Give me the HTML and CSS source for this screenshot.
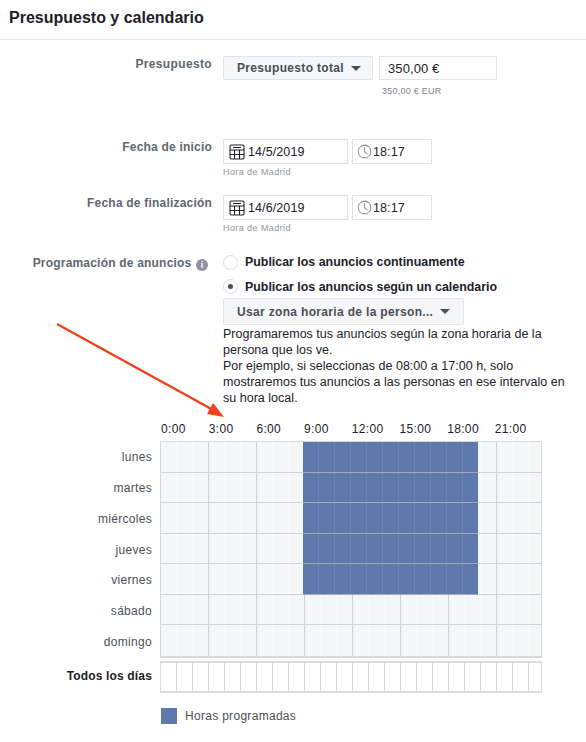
FILE: index.html
```html
<!DOCTYPE html>
<html lang="es">
<head>
<meta charset="utf-8">
<title>Presupuesto y calendario</title>
<link rel="stylesheet" href="styles.css">
</head>
<body>
<div class="page">
  <header class="head"><h1>Presupuesto y calendario</h1></header>

  <section class="row budget">
    <div class="label">Presupuesto</div>
    <div class="ctrl">
      <div class="inline">
        <div class="select sel-budget">Presupuesto total <span class="caret"></span></div>
        <div class="input in-budget">350,00 €</div>
      </div>
      <div class="eur">350,00 € EUR</div>
    </div>
  </section>

  <section class="row start">
    <div class="label">Fecha de inicio</div>
    <div class="ctrl">
      <div class="inline dates">
        <div class="input date">
          <svg class="ico" viewBox="0 0 16 16"><path d="M2.5 1h11A1.5 1.5 0 0 1 15 2.500V13.500A1.500 1.500 0 0 1 13.500 15H2.500A1.500 1.500 0 0 1 1 13.500V2.500A1.500 1.500 0 0 1 2.500 1ZM1 6H15M1 10.500H15M5.500 6V15M10.500 6V15M4 3.500H12" fill="none" stroke="#1d2129" stroke-width="1.100"/></svg>
          14/5/2019
        </div>
        <div class="input time">
          <svg class="ico clock" viewBox="0 0 16 16"><circle cx="8" cy="8" r="6.800" fill="none" stroke="#90949c" stroke-width="1.100"/><path d="M8 3.500V8L11 11" fill="none" stroke="#90949c" stroke-width="1.100"/></svg>
          18:17
        </div>
      </div>
      <div class="tz">Hora de Madrid</div>
    </div>
  </section>

  <section class="row end">
    <div class="label">Fecha de finalización</div>
    <div class="ctrl">
      <div class="inline dates">
        <div class="input date">
          <svg class="ico" viewBox="0 0 16 16"><path d="M2.5 1h11A1.5 1.5 0 0 1 15 2.500V13.500A1.500 1.500 0 0 1 13.500 15H2.500A1.500 1.500 0 0 1 1 13.500V2.500A1.500 1.500 0 0 1 2.500 1ZM1 6H15M1 10.500H15M5.500 6V15M10.500 6V15M4 3.500H12" fill="none" stroke="#1d2129" stroke-width="1.100"/></svg>
          14/6/2019
        </div>
        <div class="input time">
          <svg class="ico clock" viewBox="0 0 16 16"><circle cx="8" cy="8" r="6.800" fill="none" stroke="#90949c" stroke-width="1.100"/><path d="M8 3.500V8L11 11" fill="none" stroke="#90949c" stroke-width="1.100"/></svg>
          18:17
        </div>
      </div>
      <div class="tz">Hora de Madrid</div>
    </div>
  </section>

  <section class="row sched">
    <div class="label sched-label">Programación de anuncios <span class="info">i</span></div>
    <div class="ctrl">
      <div class="radio-row"><span class="radio"></span>Publicar los anuncios continuamente</div>
      <div class="radio-row second"><span class="radio on"></span>Publicar los anuncios según un calendario</div>
      <div class="select sel-zone"><span>Usar zona horaria de la person...</span><span class="caret"></span></div>
      <p class="note">Programaremos tus anuncios según la zona horaria de la persona que los ve.<br>Por ejemplo, si seleccionas de 08:00 a 17:00 h, solo mostraremos tus anuncios a las personas en ese intervalo en su hora local.</p>
    </div>
  </section>

  <section class="calendar">
    <div class="hours">
      <span>0:00</span><span>3:00</span><span>6:00</span><span>9:00</span><span>12:00</span><span>15:00</span><span>18:00</span><span>21:00</span>
    </div>
    <div class="cal-body">
      <div class="days">
        <div>lunes</div><div>martes</div><div>miércoles</div><div>jueves</div><div>viernes</div><div>sábado</div><div>domingo</div>
      </div>
      <div class="grid">
        <div class="day"><div class="sel"></div></div>
        <div class="day"><div class="sel"></div></div>
        <div class="day"><div class="sel"></div></div>
        <div class="day"><div class="sel"></div></div>
        <div class="day"><div class="sel"></div></div>
        <div class="day"></div>
        <div class="day"></div>
      </div>
    </div>
    <div class="all">
      <div class="all-label">Todos los días</div>
      <div class="all-cells"></div>
    </div>
    <div class="legend"><span class="swatch"></span>Horas programadas</div>
  </section>

  <svg class="arrow" viewBox="0 0 586 742" width="586" height="742">
    <path d="M57 324L215 411" stroke="#f4401c" stroke-width="2.400" fill="none"/>
    <path d="M224 417L207 414L213 403Z" fill="#f4401c"/>
  </svg>
</div>
</body>
</html>
```
FILE: styles.css
```css
* { box-sizing: border-box; }
html, body { margin: 0; padding: 0; background: #fff; }
body { font-family: "Liberation Sans", Arial, sans-serif; color: #1d2129; font-size: 13px; }
.page { position: relative; width: 586px; height: 742px; overflow: hidden; }

.head { height: 40px; border-bottom: 1px solid #e5e6e8; padding: 9px 0 0 9px; }
h1 { margin: 0; font-size: 16px; line-height: 18px; font-weight: 700; letter-spacing: 0; }

.row { display: grid; grid-template-columns: 212px 1fr; column-gap: 11px; }
.label { text-align: right; font-weight: 700; font-size: 12px; line-height: 16px; color: #606770; letter-spacing: 0.35px; white-space: nowrap; }
.inline { display: flex; gap: 6px; }

.budget { padding-top: 16px; }
.select { display: flex; align-items: center; background: #f5f6f7; border: 1px solid #e2e4e8; color: #4b4f56; font-weight: 700; font-size: 12px; letter-spacing: 0.33px; border-radius: 2px; white-space: nowrap; }
.sel-budget { width: 150px; height: 24px; padding-left: 13px; }
.in-budget { width: 118px; height: 24px; padding-left: 8px; }
.input { display: flex; align-items: center; background: #fff; border: 1px solid #e2e4e8; font-size: 13px; letter-spacing: 0.1px; }
.caret { display: inline-block; margin-left: 7px; border: 5px solid transparent; border-top: 5px solid #4b4f56; border-bottom: 0; }
.eur { margin: 6px 0 0 159px; font-size: 9px; line-height: 11px; color: #7f8389; letter-spacing: 0.25px; }

.start { padding-top: 42px; }
.end { padding-top: 17px; }
.start .label, .end .label { letter-spacing: 0.2px; }
.dates { gap: 4px; height: 25px; }
.date { width: 125px; padding-left: 5px; font-size: 12.500px; }
.time { width: 80px; padding-left: 4px; font-size: 12.500px; }
.ico { width: 16px; height: 16px; margin-right: 3px; flex: none; }
.clock { width: 15px; height: 15px; margin-right: 1px; }
.tz { margin-top: 2px; font-size: 9px; line-height: 12px; color: #90949c; letter-spacing: 0.42px; }

.sched { padding-top: 20px; }
.sched-label { letter-spacing: 0.2px; padding-right: 4px; margin-top: 1px; }
.info { display: inline-block; width: 12px; height: 12px; margin-left: 1px; border-radius: 50%; background: #8d949e; color: #fff; font-size: 9px; line-height: 12px; text-align: center; letter-spacing: 0; vertical-align: -1px; }
.radio-row { display: flex; align-items: center; height: 16px; font-weight: 700; font-size: 12.400px; letter-spacing: 0; white-space: nowrap; }
.radio-row.second { margin-top: 8.500px; }
.radio { position: relative; width: 15px; height: 15px; margin-right: 7px; border: 1px solid #dddfe2; border-radius: 50%; background: #fff; flex: none; }
.radio.on::after { content: ""; position: absolute; left: 4px; top: 4px; width: 5px; height: 5px; border-radius: 50%; background: #4b4f56; }
.sel-zone { justify-content: space-between; width: 241px; height: 27px; margin-top: 3.500px; padding: 0 13px 0 13px; }
.note { width: 350px; margin: 1px 0 0; font-size: 12.500px; line-height: 16px; letter-spacing: 0.02px; color: #1d2129; }

.calendar { margin-top: 16px; }
.hours { display: flex; padding-left: 161px; height: 14px; font-size: 12px; line-height: 14px; color: #1d2129; letter-spacing: 0.35px; }
.hours span { width: 47.700px; flex: none; }
.cal-body { display: flex; margin-top: 5px; }
.days { width: 152px; margin-right: 8px; padding-top: 1px; text-align: right; font-size: 12px; color: #4b4f56; letter-spacing: 0.3px; }
.days div { height: 30.860px; line-height: 30px; }
.grid { width: 382px; height: 217px; border: 1px solid #d6d8db; border-width: 1px 1px 2px 1px; }
.day {
  position: relative; height: 30.570px; border-bottom: 1px solid #cfd1d4;
  background-color: #f5f6f8;
  background-image:
    repeating-linear-gradient(90deg, transparent 0 47px, #cfd1d4 47px 48px),
    repeating-linear-gradient(90deg, transparent 0 15px, #fbfbfc 15px 16px);
  background-size: 381px 100%;
}
.day:last-child { border-bottom: 0; }
.sel {
  position: absolute; left: 142px; top: 0; bottom: -1px; width: 175px;
  background-color: #6079ac;
  background-image: repeating-linear-gradient(90deg, transparent 0 15px, #7285ab 15px 16px);
  border-bottom: 1px solid #a3a9b5;
}
.all { display: flex; margin-top: 3px; }
.all-label { width: 152px; margin-right: 8px; text-align: right; font-weight: 700; font-size: 12px; line-height: 30px; letter-spacing: 0.15px; }
.all-cells {
  width: 382px; height: 32px; border: 1px solid #dcdddf; border-width: 2px 1px;
  background-color: #fff;
  background-image: repeating-linear-gradient(90deg, transparent 0 15px, #d6d8db 15px 16px);
}
.legend { display: flex; align-items: center; margin: 15px 0 0 161px; font-size: 12px; letter-spacing: 0.3px; color: #4b4f56; }
.swatch { width: 16px; height: 16px; margin-right: 8px; background: #6079ac; flex: none; }

.arrow { position: absolute; left: 0; top: 0; pointer-events: none; }
```
